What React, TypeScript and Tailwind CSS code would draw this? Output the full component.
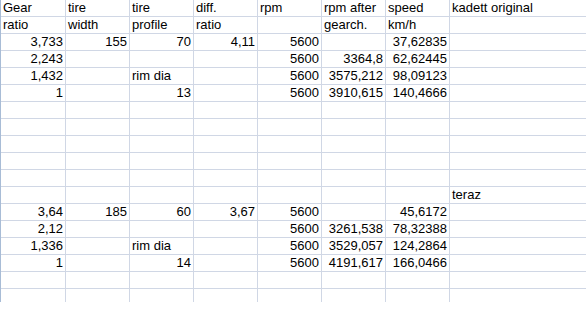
const rows: string[][] = [
  ["Gear", "tire", "tire", "diff.", "rpm", "rpm after", "speed", "kadett original"],
  ["ratio", "width", "profile", "ratio", "", "gearch.", "km/h", ""],
  ["3,733", "155", "70", "4,11", "5600", "", "37,62835", ""],
  ["2,243", "", "", "", "5600", "3364,8", "62,62445", ""],
  ["1,432", "", "rim dia", "", "5600", "3575,212", "98,09123", ""],
  ["1", "", "13", "", "5600", "3910,615", "140,4666", ""],
  [],
  [],
  [],
  [],
  [],
  ["", "", "", "", "", "", "", "teraz"],
  ["3,64", "185", "60", "3,67", "5600", "", "45,6172", ""],
  ["2,12", "", "", "", "5600", "3261,538", "78,32388", ""],
  ["1,336", "", "rim dia", "", "5600", "3529,057", "124,2864", ""],
  ["1", "", "14", "", "5600", "4191,617", "166,0466", ""],
  [],
  [],
];

// numbers sit on the right like in the sheet, words on the left
const isNumber = (v: string) => /^[0-9][0-9,]*$/.test(v);

function Cell({ value, col }: { value: string; col: number }) {
  return (
    <div
      className={
        "h-[17px] border-b border-[#d0d7e5] px-[2px] leading-[16px] whitespace-nowrap overflow-visible " +
        (col < 7 ? "border-r " : "") +
        (isNumber(value) ? "text-right" : "text-left")
      }
    >
      {value}
    </div>
  );
}

export default function App() {
  return (
    <div className="w-[586px] h-[321px] bg-white overflow-hidden">
      <div
        className="h-[302px] overflow-hidden border-l border-[#a8bcd6] grid grid-cols-[65px_64px_64px_64px_64px_64px_64px_1fr] auto-rows-[17px] text-[13px] text-black"
        style={{ fontFamily: '"Liberation Sans", Arial, sans-serif' }}
      >
        {rows.map((row, r) =>
          Array.from({ length: 8 }).map((_, c) => (
            <Cell key={`${r}-${c}`} value={row[c] ?? ""} col={c} />
          )),
        )}
      </div>
    </div>
  );
}
